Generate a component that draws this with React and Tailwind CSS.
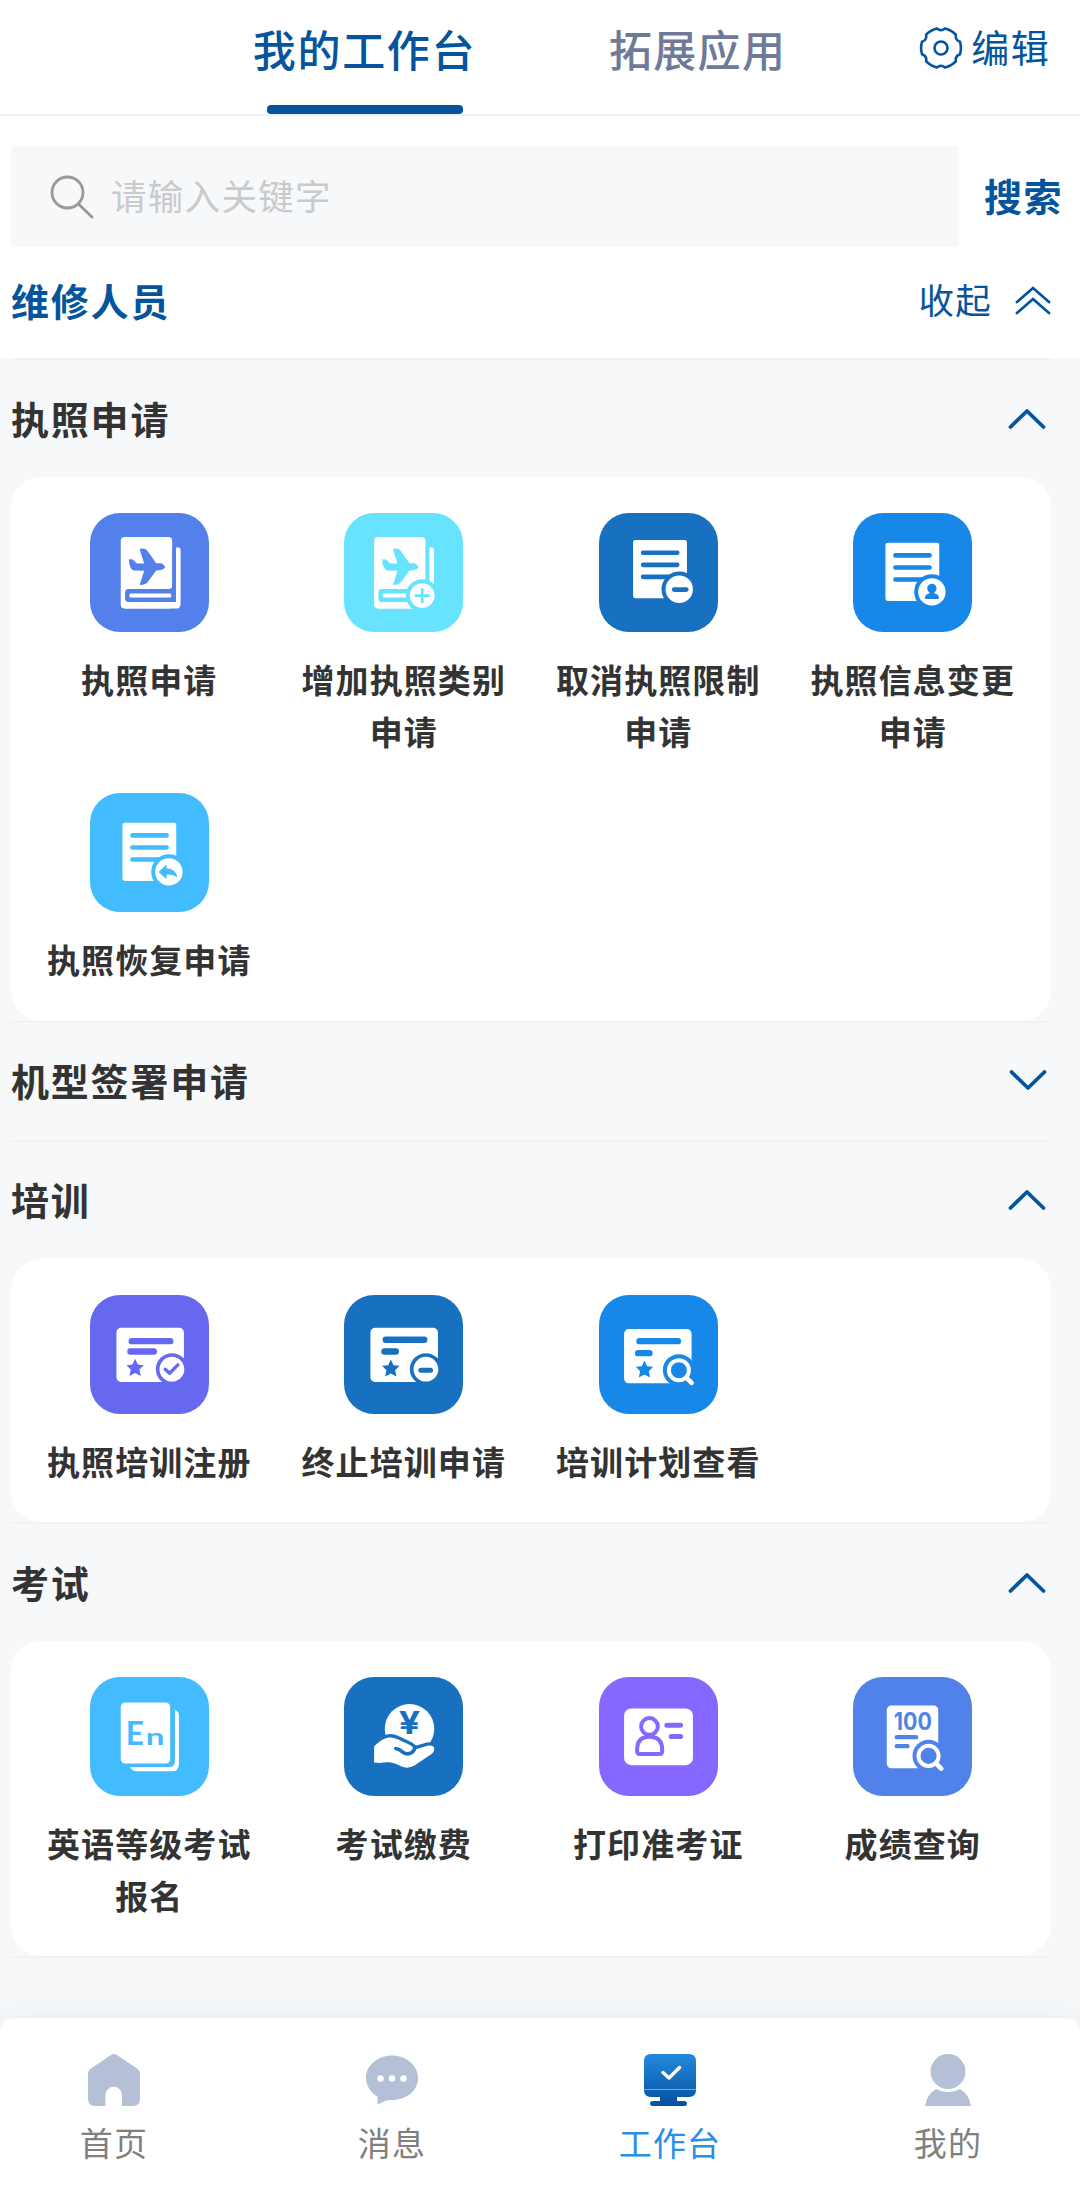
import React, { useState } from 'react';

const STAR = 'M0 -27 L8 -10 L26 -8 L13 5 L17 24 L0 15 L-17 24 L-13 5 L-26 -8 L-8 -10 Z';

// Every tile glyph is drawn on the same 356 x 356 grid, `bg` is the tile colour
function Badge({ x, y, bg, r = 40, gap = 12, children }) {
  return (
    <g transform={`translate(${x} ${y})`}>
      <circle r={r + gap} fill={bg} />
      <circle r={r} fill="#fff" />
      {children}
    </g>
  );
}

function Lens({ x, y, bg }) {
  return (
    <g transform={`translate(${x} ${y})`}>
      <circle r="48" fill={bg} />
      <circle r="30" fill="none" stroke="#fff" strokeWidth="12" />
      <path d="M23 23 L38 38" stroke="#fff" strokeWidth="14" strokeLinecap="round" />
    </g>
  );
}

function Book({ bg, plus }) {
  return (
    <g transform={plus ? 'translate(-2 0)' : undefined}>
      <rect x="92" y="72" width="154" height="214" rx="12" fill="#fff" />
      <path d="M257 103 H265 Q271 103 271 109 V272 Q271 286 257 286 H104 V266 H257 Z" fill="#fff" />
      <path d="M246 100 H257 V256 Q257 266 247 266 H115 Q105 266 105 256 V237 Q105 227 115 227 H236 Q246 227 246 217 Z" fill={bg} />
      <rect x="118" y="241" width="125" height="12" rx="4" fill="#fff" />
      <path
        d="M116 138 L128 139 L140 151 H162 L149 110 Q148 106 156 106 Q167 106 171 112 L198 150 H212 Q223 154 225 163 Q218 172 198 172 L171 209 Q164 216 149 215 L162 173 L130 172 Q118 168 116 138 Z"
        fill={bg}
      />
      {plus && (
        <Badge x={236} y={247} bg={bg} r={37}>
          <path d="M-22 0 H22 M0 -22 V22" stroke={bg} strokeWidth="8" />
        </Badge>
      )}
    </g>
  );
}

function Doc({ bg, children }) {
  return (
    <>
      <rect x="97" y="89" width="161" height="174" rx="7" fill="#fff" />
      <path d="M127 127 H229 M127 163 H229 M127 199 H229" stroke={bg} strokeWidth="14" strokeLinecap="round" />
      {children}
    </>
  );
}

function Certificate({ bg, y = 98, lineY, line2, star, children }) {
  return (
    <>
      <rect x="79" y={y} width="202" height="162" rx="14" fill="#fff" />
      <path d={`M125 ${lineY} H240 M121 ${line2[0]} H${line2[1]}`} stroke={bg} strokeWidth="19" strokeLinecap="round" />
      <path d={STAR} transform={`translate(${star[0]} ${star[1]})`} fill={bg} />
      {children}
    </>
  );
}

const GLYPHS = {
  book: (bg) => <Book bg={bg} />,
  bookPlus: (bg) => <Book bg={bg} plus />,
  docMinus: (bg) => (
    <g transform="translate(5 -8)">
      <Doc bg={bg}>
        <Badge x={235} y={236} bg={bg} r={41}>
          <path d="M-15 1 H21" stroke={bg} strokeWidth="14" strokeLinecap="round" />
        </Badge>
      </Doc>
    </g>
  ),
  docUser: (bg) => (
    <Doc bg={bg}>
      <Badge x={236} y={236} bg={bg} r={41}>
        <circle cy="-10" r="14" fill={bg} />
        <path d="M-7 -4 H7 V4 Q22 7 21 21 H-21 Q-22 7 -7 4 Z" fill={bg} />
      </Badge>
    </Doc>
  ),
  docBack: (bg) => (
    <Doc bg={bg}>
      <Badge x={236} y={236} bg={bg} r={41}>
        <path d="M-31 0 L-7 -22 V-11 Q20 -10 26 16 Q12 6 -7 8 V22 Z" fill={bg} />
      </Badge>
    </Doc>
  ),
  certCheck: (bg) => (
    <Certificate bg={bg} lineY={138} line2={[169, 191]} star={[135, 218]}>
      <Badge x={245} y={222} bg={bg} r={37} gap={11}>
        <path d="M-20 0 L-7 12 L18 -13" fill="none" stroke={bg} strokeWidth="10" strokeLinecap="round" strokeLinejoin="round" />
      </Badge>
    </Certificate>
  ),
  certMinus: (bg) => (
    <Certificate bg={bg} lineY={134} line2={[169, 155]} star={[140, 220]}>
      <Badge x={245} y={222} bg={bg} r={37} gap={11}>
        <path d="M-15 3 H14" stroke={bg} strokeWidth="15" strokeLinecap="round" />
      </Badge>
    </Certificate>
  ),
  certSearch: (bg) => (
    <g transform="translate(-4 4)">
      <Certificate bg={bg} lineY={134} line2={[170, 155]} star={[140, 219]}>
        <Lens x={243} y={221} bg={bg} />
      </Certificate>
    </g>
  ),
  english: (bg) => (
    <>
      <rect x="92" y="76" width="148" height="183" rx="14" fill="#fff" />
      <path d="M254 98 Q266 102 266 116 V260 Q266 282 244 282 H142 Q126 282 120 269 H238 Q254 269 254 253 Z" fill="#fff" />
      <text x="107" y="202" fill={bg} className="font-[Lato] text-[95px] font-bold">E</text>
      <text x="167" y="202" fill={bg} className="font-[Lato] text-[70px] font-bold" textLength="56" lengthAdjust="spacingAndGlyphs">n</text>
    </>
  ),
  pay: (bg) => (
    <>
      <circle cx="196" cy="155" r="74" fill="#fff" />
      <text x="164" y="170" fill={bg} className="font-[Inter] text-[92px] font-bold" textLength="64" lengthAdjust="spacingAndGlyphs">¥</text>
      <path
        d="M90 208 Q112 184 134 181 Q148 180 162 187 L196 203 Q206 209 212 217 L250 206 Q268 202 270 214 Q270 224 262 230 L212 264 Q192 276 172 268 Q150 256 136 255 Q120 254 108 257 L90 256 Z"
        fill="#fff"
        stroke={bg}
        strokeWidth="20"
        paintOrder="stroke"
      />
      <path d="M155 214 Q165 215 176 225 Q190 235 203 226 Q211 219 213 211" fill="none" stroke={bg} strokeWidth="11" strokeLinecap="round" />
    </>
  ),
  idCard: (bg) => (
    <>
      <rect x="75" y="94" width="206" height="170" rx="22" fill="#fff" />
      <g fill="none" stroke={bg} strokeWidth="12">
        <circle cx="151" cy="148" r="25" />
        <path d="M114 218 Q114 179 151 179 Q189 179 189 218 V222 Q189 230 181 230 H122 Q114 230 114 222 Z" />
        <path d="M203 144 H244 M216 178 H244" strokeWidth="15" strokeLinecap="round" />
      </g>
    </>
  ),
  score: (bg) => (
    <>
      <rect x="101" y="85" width="154" height="188" rx="14" fill="#fff" />
      <text x="122" y="159" fill={bg} className="font-[Inter] text-[71px] font-bold" textLength="114" lengthAdjust="spacingAndGlyphs">100</text>
      <path d="M131 180 H189 M131 207 H163" stroke={bg} strokeWidth="13" strokeLinecap="round" />
      <Lens x={226} y={236} bg={bg} />
    </>
  ),
};

const SECTIONS = [
  {
    title: '执照申请',
    open: true,
    items: [
      { name: '执照申请', glyph: 'book', color: '#5480ec' },
      { name: '增加执照类别申请', glyph: 'bookPlus', color: '#67e3ff' },
      { name: '取消执照限制申请', glyph: 'docMinus', color: '#1770c0' },
      { name: '执照信息变更申请', glyph: 'docUser', color: '#1787e8' },
      { name: '执照恢复申请', glyph: 'docBack', color: '#42bbff' },
    ],
  },
  { title: '机型签署申请', open: false, items: [] },
  {
    title: '培训',
    open: true,
    items: [
      { name: '执照培训注册', glyph: 'certCheck', color: '#6768f0' },
      { name: '终止培训申请', glyph: 'certMinus', color: '#1770c0' },
      { name: '培训计划查看', glyph: 'certSearch', color: '#1787e8' },
    ],
  },
  {
    title: '考试',
    open: true,
    items: [
      { name: '英语等级考试报名', glyph: 'english', color: '#42bbff' },
      { name: '考试缴费', glyph: 'pay', color: '#1770c0' },
      { name: '打印准考证', glyph: 'idCard', color: '#8667ff' },
      { name: '成绩查询', glyph: 'score', color: '#5182e9' },
    ],
  },
];

const NAV_ITEMS = [
  {
    name: '首页',
    icon: (
      <path
        d="M23 1 Q26 -1 29 1 L49 14.500 Q52 16.500 52 20 V45 Q52 52 45 52 H34 V41 A8.300 8.300 0 0 0 17.400 41 V52 H7 Q0 52 0 45 V20 Q0 16.500 3 14.500 Z"
        fill="#b5c0d7"
      />
    ),
  },
  {
    name: '消息',
    icon: (
      <>
        <path d="M26 1.500 C40 1.500 52 11 52 24 C52 37 40 46 26 46 Q22 46 19 47 L11.500 50.500 V42.500 C4 38 0 31 0 24 C0 11 12 1.500 26 1.500 Z" fill="#b5c0d7" />
        <g fill="#fff">
          <circle cx="14.500" cy="24.500" r="3.200" />
          <circle cx="26" cy="24.500" r="3.200" />
          <circle cx="37.500" cy="24.500" r="3.200" />
        </g>
      </>
    ),
  },
  {
    name: '工作台',
    active: true,
    icon: (
      <>
        <defs>
          <linearGradient id="screen" x1="0" y1="0" x2="0" y2="1">
            <stop offset="0" stopColor="#2489de" />
            <stop offset="1" stopColor="#05519f" />
          </linearGradient>
        </defs>
        <path
          d="M7 0 H45 Q52 0 52 7 V36 Q52 43 45 43 H33 V47 H40 Q43 47 43 49.500 Q43 52 40 52 H9 Q6 52 6 49.500 Q6 47 9 47 H16 V43 H7 Q0 43 0 36 V7 Q0 0 7 0 Z"
          fill="url(#screen)"
        />
        <path d="M0 35.500 H52" stroke="#6fa9dc" strokeWidth="1" />
        <path d="M19 18.500 L25 24 L35.500 13.500" fill="none" stroke="#fff" strokeWidth="3.400" strokeLinecap="round" strokeLinejoin="round" />
      </>
    ),
  },
  {
    name: '我的',
    icon: (
      <g fill="#b5c0d7">
        <circle cx="26" cy="17.500" r="17.500" />
        <path d="M14 35 Q26 41.500 38 35 Q47 40 49 52 H3 Q5 40 14 35 Z" />
      </g>
    ),
  },
];

// Six soft lobes around the centre
function gearPath() {
  const point = (r, deg) => {
    const a = (deg * Math.PI) / 180;
    return `${(22 + r * Math.cos(a)).toFixed(2)} ${(22 + r * Math.sin(a)).toFixed(2)}`;
  };
  let d = `M${point(20, -18)}`;
  for (let i = 0; i < 6; i++) {
    const at = i * 60;
    d += ` Q${point(20.8, at)} ${point(20, at + 18)} Q${point(16, at + 30)} ${point(20, at + 42)}`;
  }
  return d + ' Z';
}

function Chevron({ open }) {
  return (
    <svg className="h-[22px] w-10" viewBox="0 0 40 22" fill="none" stroke="#04559d" strokeWidth="3.800" strokeLinecap="round" strokeLinejoin="round">
      <path d={open ? 'M3.500 19 L20 3 L36.500 19' : 'M4.500 2 L21 18 L37.500 2'} />
    </svg>
  );
}

function Header() {
  return (
    <header className="flex h-[116px] items-start border-b-2 border-[#f0f2f4] pl-[252px]">
      <div className="flex h-[114px] w-[225px] flex-col items-center justify-between">
        <span className="mt-[14px] text-[43px] leading-[68px] font-medium tracking-[1.700px] whitespace-nowrap text-[#04559d]">我的工作台</span>
        <span className="h-[9px] w-[196px] rounded-[4px] bg-[#04559d]" />
      </div>
      <span className="mt-[14px] ml-[132px] text-[43px] leading-[68px] font-medium tracking-[1.300px] whitespace-nowrap text-[#6f7a99]">拓展应用</span>
      <button className="mt-[12px] ml-[133px] flex items-center gap-[8px] whitespace-nowrap text-[#04559d]">
        <svg className="mt-[3px] h-11 w-11" viewBox="0 0 44 44" fill="none" stroke="currentColor" strokeWidth="2.600">
          <path d={gearPath()} />
          <circle cx="22" cy="22" r="6.500" />
        </svg>
        <span className="text-[38px] leading-[68px] tracking-[1.500px]">编辑</span>
      </button>
    </header>
  );
}

function SearchBar() {
  return (
    <div className="mt-[30px] flex h-[101px] items-center pl-[11px]">
      <div className="flex h-full w-[948px] items-center rounded-[4px] bg-[#f6f8fa] pl-[38px]">
        <svg className="h-[46px] w-[46px]" viewBox="0 0 46 46" fill="none" stroke="#999" strokeWidth="2.800" strokeLinecap="round">
          <circle cx="18.500" cy="18.500" r="15.500" />
          <path d="M29.500 30 L43 43" />
        </svg>
        <span className="mb-[4px] ml-4 text-[35.500px] leading-none tracking-[1.300px] text-[#c8cacc]">请输入关键字</span>
      </div>
      <button className="mb-[4px] ml-[25px] text-[38px] leading-none font-bold tracking-[1.500px] text-[#04559d]">搜索</button>
    </div>
  );
}

function Section({ section }) {
  const [open, setOpen] = useState(section.open);

  return (
    <section className="mr-[29px] ml-[11px]">
      <button
        className="flex h-[119px] w-full items-center justify-between border-t-2 border-[#f0f2f4] pr-[4px]"
        onClick={() => setOpen(!open)}
      >
        <span className="mb-[3px] text-[38px] font-bold tracking-[1.800px] text-[#333]">{section.title}</span>
        <Chevron open={open} />
      </button>
      {open && (
        <div className="grid grid-cols-4 gap-y-[35px] rounded-[30px] bg-white px-[11px] pt-[36px] pb-[34px]">
          {section.items.map((item) => (
            <div key={item.name} className="flex flex-col items-center">
              <svg className="h-[119px] w-[119px] rounded-[30px]" viewBox="0 0 356 356">
                <rect width="356" height="356" fill={item.color} />
                {GLYPHS[item.glyph](item.color)}
              </svg>
              <span className="mt-[22px] mb-px w-[212px] text-center text-[33px] leading-[51.500px] font-bold tracking-[1.100px] text-[#333]">{item.name}</span>
            </div>
          ))}
        </div>
      )}
    </section>
  );
}

function BottomNav() {
  return (
    <nav className="flex h-[177px] items-start justify-between rounded-t-[14px] bg-white pt-[36px] pr-[80px] pl-[62px] shadow-[0_-4px_28px_rgba(60,70,80,0.05)]">
      {NAV_ITEMS.map((item) => (
        <div key={item.name} className="flex w-[104px] flex-col items-center">
          <svg className="h-[52px] w-[52px]" viewBox="0 0 52 52">{item.icon}</svg>
          <span
            className={
              item.active
                ? 'mt-[11px] text-[33px] leading-[50px] tracking-[1.200px] whitespace-nowrap text-[#2a8fe2]'
                : 'mt-[11px] text-[33px] leading-[50px] tracking-[1.200px] whitespace-nowrap text-[#808080]'
            }
          >
            {item.name}
          </span>
        </div>
      ))}
    </nav>
  );
}

export default function App() {
  return (
    <div className="flex h-[2195px] w-[1080px] flex-col overflow-hidden bg-[#f6f8fa] font-['Noto_Sans_CJK_SC',sans-serif]">
      <div className="h-[358px] bg-white">
        <Header />
        <SearchBar />
        <div className="flex h-[108px] items-center justify-between pr-[28px] pl-[11px]">
          <h2 className="mb-[3px] text-[38px] leading-none font-bold tracking-[1.800px] text-[#04559d]">维修人员</h2>
          <button className="flex items-center text-[35.500px] leading-none tracking-[1.200px] text-[#04559d]">
            <span className="mb-[4px]">收起</span>
            <svg className="ml-[22px] h-[30px] w-[38px]" viewBox="0 0 38 30" fill="none" stroke="currentColor" strokeWidth="2.800" strokeLinecap="round">
              <path d="M3 16 L19 2 L35 16 M3 27 L19 13 L35 27" />
            </svg>
          </button>
        </div>
      </div>
      <main className="flex-1">
        {SECTIONS.map((section) => (
          <Section key={section.title} section={section} />
        ))}
        <div className="mr-[29px] ml-[11px] h-[2px] bg-[#f0f2f4]" />
      </main>
      <BottomNav />
    </div>
  );
}
